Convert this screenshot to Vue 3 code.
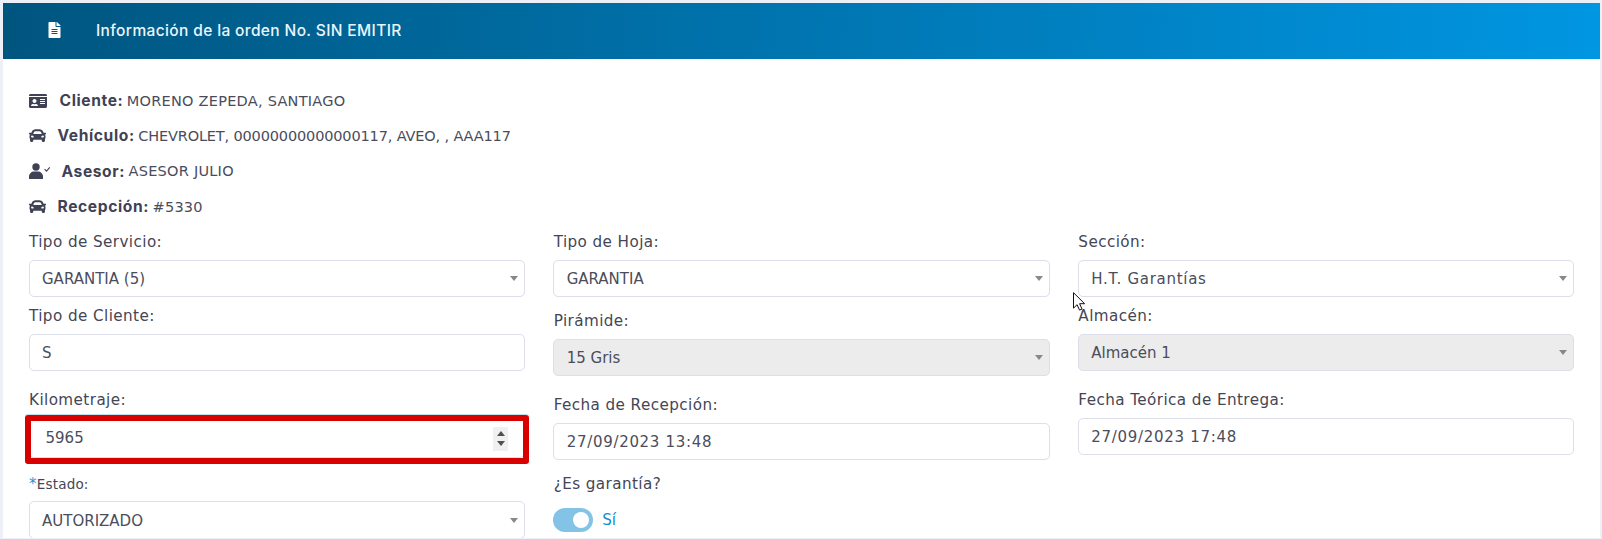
<script setup>
const carPath = "M499.99 176h-59.87l-16.64-41.6C406.38 91.63 365.57 64 319.5 64h-127c-46.06 0-86.88 27.63-103.99 70.4L71.87 176H12.01C4.2 176-1.53 183.34.37 190.91l6 24C7.7 220.25 12.5 224 18.01 224h20.07C24.65 235.73 16 252.78 16 272v48c0 16.12 6.16 30.67 16 41.93V416c0 17.67 14.33 32 32 32h32c17.67 0 32-14.33 32-32v-32h256v32c0 17.67 14.33 32 32 32h32c17.67 0 32-14.33 32-32v-54.07c9.84-11.25 16-25.8 16-41.93v-48c0-19.22-8.65-36.27-22.07-48H494c5.51 0 10.31-3.75 11.64-9.09l6-24c1.89-7.57-3.84-14.91-11.65-14.91zm-352.06-17.83c7.29-18.22 24.94-30.17 44.57-30.17h127c19.63 0 37.28 11.95 44.57 30.17L384 208H128l19.93-49.83zM96 319.8c-19.2 0-32-12.76-32-31.9S76.8 256 96 256s48 28.71 48 47.85-28.8 15.95-48 15.95zm320 0c-19.2 0-48 3.19-48-15.95S396.8 256 416 256s32 12.76 32 31.9-12.8 31.9-32 31.9z"
</script>

<template>
  <div class="page">
    <section class="card">
      <header class="head">
        <svg class="file" viewBox="0 0 384 512"><path fill="currentColor" d="M224 136V0H24C10.7 0 0 10.7 0 24v464c0 13.3 10.7 24 24 24h336c13.3 0 24-10.7 24-24V160H248c-13.2 0-24-10.8-24-24zm64 236c0 6.6-5.4 12-12 12H108c-6.6 0-12-5.4-12-12v-8c0-6.6 5.4-12 12-12h168c6.6 0 12 5.4 12 12v8zm0-64c0 6.6-5.4 12-12 12H108c-6.6 0-12-5.4-12-12v-8c0-6.6 5.4-12 12-12h168c6.6 0 12 5.4 12 12v8zm0-72v8c0 6.6-5.4 12-12 12H108c-6.6 0-12-5.4-12-12v-8c0-6.6 5.4-12 12-12h168c6.6 0 12 5.4 12 12zm96-114.1v6.1H256V0h6.1c6.4 0 12.5 2.5 17 7l97.9 98c4.5 4.5 7 10.6 7 16.9z"/></svg>
        <h1>Información de la orden No. SIN EMITIR</h1>
      </header>

      <div class="body">
        <div class="info">
          <p class="row">
            <svg class="ico idc" viewBox="0 0 576 512"><path fill="currentColor" d="M528 32H48C21.5 32 0 53.5 0 80v16h576V80c0-26.5-21.5-48-48-48zM0 432c0 26.5 21.5 48 48 48h480c26.5 0 48-21.5 48-48V128H0v304zm352-232c0-4.4 3.6-8 8-8h144c4.4 0 8 3.6 8 8v16c0 4.4-3.6 8-8 8H360c-4.4 0-8-3.6-8-8v-16zm0 64c0-4.4 3.6-8 8-8h144c4.4 0 8 3.6 8 8v16c0 4.4-3.6 8-8 8H360c-4.4 0-8-3.6-8-8v-16zm0 64c0-4.4 3.6-8 8-8h144c4.4 0 8 3.6 8 8v16c0 4.4-3.6 8-8 8H360c-4.4 0-8-3.6-8-8v-16zM176 192c35.3 0 64 28.7 64 64s-28.7 64-64 64-64-28.7-64-64 28.7-64 64-64zM67.1 396.2C75.5 370.5 99.6 352 128 352h8.2c12.3 5.1 25.7 8 39.8 8s27.6-2.9 39.8-8h8.2c28.4 0 52.5 18.5 60.9 44.2 3.2 9.9-5.2 19.8-15.6 19.8H82.7c-10.4 0-18.8-10-15.6-19.8z"/></svg>
            <b>Cliente:</b><span class="loose">MORENO ZEPEDA, SANTIAGO</span>
          </p>
          <p class="row">
            <svg class="ico car" viewBox="0 0 512 512"><path fill="currentColor" :d="carPath"/></svg>
            <b>Vehículo:</b><span class="tight">CHEVROLET, 00000000000000117, AVEO, , AAA117</span>
          </p>
          <p class="row">
            <svg class="ico usr" viewBox="0 0 22 16">
              <circle cx="7" cy="4" r="3.7" fill="currentColor"/>
              <path fill="currentColor" d="M0 16v-2.2C0 10.6 2.6 8.6 5 8.6h4c2.4 0 5 2 5 5.2V16z"/>
              <path fill="none" stroke="currentColor" stroke-width="1.1" d="M15.6 6.2l1.9 1.9 3.3-3.7"/>
            </svg>
            <b>Asesor:</b><span class="loose">ASESOR JULIO</span>
          </p>
          <p class="row">
            <svg class="ico car" viewBox="0 0 512 512"><path fill="currentColor" :d="carPath"/></svg>
            <b>Recepción:</b><span class="loose">#5330</span>
          </p>
        </div>

        <div class="grid">
          <div class="col">
            <div class="field">
              <label>Tipo de Servicio:</label>
              <div class="control select">GARANTIA (5)</div>
            </div>
            <div class="field s8">
              <label>Tipo de Cliente:</label>
              <div class="control">S</div>
            </div>
            <div class="field s18 km">
              <label>Kilometraje:</label>
              <div class="control number">
                <span>5965</span>
                <span class="spin"><i class="up"></i><i class="down"></i></span>
              </div>
              <div class="mark"></div>
            </div>
            <div class="field s-est">
              <label class="small"><em>*</em>Estado:</label>
              <div class="control select">AUTORIZADO</div>
            </div>
          </div>

          <div class="col">
            <div class="field">
              <label>Tipo de Hoja:</label>
              <div class="control select">GARANTIA</div>
            </div>
            <div class="field s13">
              <label>Pirámide:</label>
              <div class="control select off">15 Gris</div>
            </div>
            <div class="field s18">
              <label>Fecha de Recepción:</label>
              <div class="control date">27/09/2023 13:48</div>
            </div>
            <div class="field s13">
              <label>¿Es garantía?</label>
              <div class="toggle-row">
                <span class="toggle"><i></i></span>
                <span class="yes">Sí</span>
              </div>
            </div>
          </div>

          <div class="col">
            <div class="field">
              <label>Sección:</label>
              <div class="control select wide">H.T. Garantías</div>
            </div>
            <div class="field s8">
              <label>Almacén:</label>
              <div class="control select off">Almacén 1</div>
            </div>
            <div class="field s18">
              <label>Fecha Teórica de Entrega:</label>
              <div class="control date">27/09/2023 17:48</div>
            </div>
          </div>
        </div>
      </div>
    </section>

    <svg class="cursor" viewBox="0 0 12 19"><path fill="#fff" stroke="#111" stroke-width="1" d="M.5.7v15.4l3.6-3.4 2.4 5.4 2.5-1.1-2.4-5.3h5z"/></svg>
  </div>
</template>

<style>
html, body { margin: 0; background: #eef0f8; }
</style>

<style scoped>
.page {
  position: relative;
  box-sizing: border-box;
  height: 539px;
  padding: 3px 2px 1px 3px;
  overflow: hidden;
  font-family: "DejaVu Sans", "Liberation Sans", sans-serif;
  color: #3f4254;
}
.card { background: #fff; height: 535px; overflow: hidden; }
.head {
  box-sizing: border-box;
  height: 56px;
  padding-bottom: 2px;
  display: flex;
  align-items: center;
  background: linear-gradient(95deg, #00557f 0%, #0096e2 100%);
  color: #fff;
}
.file { width: 13px; height: 16px; margin-left: 45px; flex: none; }
h1 {
  margin: 0 0 0 35px;
  font-family: Inter, sans-serif;
  font-size: 15.5px;
  font-weight: 500;
  letter-spacing: .37px;
  color: #eaf6fc;
}
.body { padding: 24px 25.5px 0 25.5px; }
.info { height: 148px; display: flex; flex-direction: column; padding-left: .5px; }
.row {
  margin: 0;
  height: 35.3px;
  flex: none;
  display: flex;
  align-items: center;
  font-size: 14.5px;
  white-space: pre;
}
.row b { font-family: Inter, sans-serif; font-weight: 700; font-size: 15.6px; letter-spacing: .6px; }
.row span { margin-left: 3.5px; color: #4a4c5c; }
.row .loose { letter-spacing: .25px; }
.row .tight { letter-spacing: -.15px; }
.ico { flex: none; height: 16px; }
.idc { width: 18px; margin-right: 12.5px; }
.car { width: 17px; height: 17px; margin-right: 11.5px; }
.usr { width: 22px; margin-right: 10.5px; }
.grid {
  display: grid;
  grid-template-columns: repeat(3, 1fr);
  column-gap: 28px;
}
.field { position: relative; }
.s8 { margin-top: 8px; }
.s13 { margin-top: 13px; }
.s18 { margin-top: 18px; }
.s-est { margin-top: 16.5px; }
label {
  display: block;
  height: 20px;
  line-height: 22px;
  margin-bottom: 8.5px;
  padding-left: .5px;
  font-size: 15.2px;
  letter-spacing: .42px;
  color: #444655;
}
label.small { font-size: 13.5px; letter-spacing: .2px; line-height: 20px; margin-bottom: 7px; }
label em { font-style: normal; color: #1f93d6; font-size: 15px; }
.control {
  box-sizing: border-box;
  height: 37.5px;
  display: flex;
  align-items: center;
  padding: 2px 12.5px 0;
  background: #fff;
  border: 1px solid #dcdeea;
  border-radius: 5px;
  font-size: 15px;
  color: #4b4d5b;
  position: relative;
}
.date { letter-spacing: .7px; }
.wide { letter-spacing: .7px; }
.select::after {
  content: "";
  position: absolute;
  right: 6px;
  top: 50%;
  margin-top: -2px;
  border-left: 4px solid transparent;
  border-right: 4px solid transparent;
  border-top: 5px solid #888;
}
.off { background: #ececec; }
.number { height: 40px; justify-content: space-between; padding: 0 16px 0 16px; }
.spin {
  width: 15px;
  height: 24px;
  margin-top: 2px;
  background: #f0f0f0;
  display: flex;
  flex-direction: column;
  align-items: center;
  justify-content: center;
  gap: 5px;
}
.up, .down { width: 0; height: 0; border-left: 4px solid transparent; border-right: 4px solid transparent; }
.up { border-bottom: 5px solid #505050; }
.down { border-top: 5px solid #505050; }
.mark {
  position: absolute;
  left: -4px;
  right: -4px;
  bottom: -6.5px;
  height: 49px;
  box-sizing: border-box;
  border: 6.4px solid #d90000;
  border-radius: 3px;
  box-shadow: 0 -1px 0 #bfe0f0;
}
.toggle-row { display: flex; align-items: center; margin-top: 15px; gap: 9px; height: 24px; }
.toggle {
  width: 40px;
  height: 24px;
  border-radius: 12px;
  background: #82c3e6;
  position: relative;
  display: block;
}
.toggle i {
  position: absolute;
  right: 4px;
  top: 4px;
  width: 16px;
  height: 16px;
  border-radius: 50%;
  background: #fff;
}
.yes { color: #0d8ecf; font-size: 15px; }
.cursor { position: absolute; left: 1073px; top: 292px; width: 12px; height: 19px; }
</style>
